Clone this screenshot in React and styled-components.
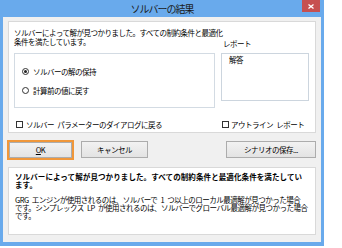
import React from "react";
import styled, { createGlobalStyle } from "styled-components";

const GlobalStyle = createGlobalStyle`
  body {
    margin: 0;
    background: #fff;
    font-family: "Noto Sans CJK JP", sans-serif;
    color: #000;
  }
`;

const Window = styled.div`
  width: 324px;
  height: 246px;
  box-sizing: border-box;
  background: #69aaec;
  padding: 0 3px 4px 3px;
  display: flex;
  flex-direction: column;
`;

const TitleBar = styled.div`
  height: 17px;
  display: grid;
  grid-template-columns: 1fr auto 1fr;
  align-items: start;
`;

const Title = styled.div`
  grid-column: 2;
  font-size: 10px;
  line-height: 17px;
  letter-spacing: -1px;
  color: #1a1a1a;
`;

const CloseButton = styled.div`
  grid-column: 3;
  justify-self: end;
  width: 18px;
  height: 12px;
  margin-right: 1px;
  background: #c75050;
  display: flex;
  align-items: center;
  justify-content: center;
`;

const Body = styled.div`
  flex: 1;
  background: #f0f0f0;
  padding: 4px 5px 7px 5px;
  display: flex;
  flex-direction: column;
`;

const Panel = styled.div`
  background: #fff;
  border: 1px solid #d9d9d9;
  box-sizing: border-box;
`;

const TopPanel = styled(Panel)`
  height: 112px;
  padding: 6px 6px 0 5px;
  display: grid;
  grid-template-columns: 201px 88px;
  column-gap: 6px;
  font-size: 7.5px;
  letter-spacing: -0.5px;
  word-spacing: 2px;
`;

const Message = styled.div`
  grid-column: 1 / 3;
  grid-row: 1;
  line-height: 9px;
  white-space: nowrap;
`;

const ReportLabel = styled.div`
  grid-column: 2;
  grid-row: 1;
  align-self: end;
  line-height: 9px;
  padding-left: 2px;
`;

const GroupBox = styled.div`
  grid-column: 1;
  grid-row: 2;
  margin-top: 5px;
  height: 55px;
  box-sizing: border-box;
  border: 1px solid #d3dbe3;
  padding: 12px 0 0 7px;
  display: flex;
  flex-direction: column;
  gap: 9px;
`;

const ListBox = styled.div`
  grid-column: 2;
  grid-row: 2;
  margin-top: 5px;
  height: 48px;
  box-sizing: border-box;
  border: 1px solid #ccd5de;
  padding: 1px 0 0 7px;
  line-height: 9px;
`;

const OptionRow = styled.label`
  display: flex;
  align-items: center;
  height: 10px;
  gap: ${({ gap }) => gap || 4}px;
  padding-left: ${({ indent }) => indent || 0}px;
  white-space: pre;
`;

const Radio = styled.span`
  width: 7px;
  height: 7px;
  box-sizing: border-box;
  border: 1px solid #333;
  border-radius: 50%;
  background: #fff;
  display: flex;
  align-items: center;
  justify-content: center;
  &::after {
    content: "";
    width: 3px;
    height: 3px;
    border-radius: 50%;
    background: ${({ checked }) => (checked ? "#222" : "transparent")};
  }
`;

const CheckBox = styled.span`
  width: 7px;
  height: 7px;
  box-sizing: border-box;
  border: 1px solid #333;
  background: #fff;
`;

const CheckCell = styled.div`
  grid-column: ${({ col }) => col};
  grid-row: 3;
  margin-top: 9px;
`;

const ButtonRow = styled.div`
  margin-top: 8px;
  height: 17px;
  display: flex;
  align-items: center;
  padding-left: 1px;
`;

const Button = styled.div`
  width: ${({ w }) => w}px;
  height: ${({ h }) => h || 17}px;
  box-sizing: border-box;
  margin-left: ${({ ml }) => (ml === "auto" ? "auto" : `${ml || 0}px`)};
  background: linear-gradient(#f2f2f2, #e3e3e3);
  border: 1px solid #acacac;
  font-size: 7.5px;
  letter-spacing: -0.5px;
  display: flex;
  align-items: center;
  justify-content: center;
  box-shadow: ${({ focus }) => (focus ? "0 0 0 2px #f0973a" : "none")};
`;

const BottomPanel = styled(Panel)`
  margin-top: 9px;
  flex: 1;
  padding: 5px 6px 0 6px;
  font-size: 7.5px;
  line-height: 8px;
  white-space: nowrap;
`;

const Headline = styled.div`
  font-weight: bold;
  letter-spacing: 0.1px;
`;

const Detail = styled.div`
  margin-top: 7px;
  letter-spacing: -0.5px;
  word-spacing: 2px;
`;

export default function App() {
  return (
    <>
      <GlobalStyle />
      <Window>
        <TitleBar>
          <Title>ソルバーの結果</Title>
          <CloseButton>
            <svg width="6" height="5" viewBox="0 0 6 5">
              <path d="M0.5 0.5 L5.5 4.5 M5.5 0.5 L0.5 4.5" stroke="#fff" strokeWidth="1.3" />
            </svg>
          </CloseButton>
        </TitleBar>
        <Body>
          <TopPanel>
            <Message>
              ソルバーによって解が見つかりました。すべての制約条件と最適化
              <br />
              条件を満たしています。
            </Message>
            <ReportLabel>レポート</ReportLabel>
            <GroupBox>
              <OptionRow>
                <Radio checked />
                ソルバーの解の保持
              </OptionRow>
              <OptionRow>
                <Radio />
                計算前の値に戻す
              </OptionRow>
            </GroupBox>
            <ListBox>解答</ListBox>
            <CheckCell col={1}>
              <OptionRow indent={2} gap={3}>
                <CheckBox />
                {"ソルバー パラメーターのダイアログに戻る"}
              </OptionRow>
            </CheckCell>
            <CheckCell col={2}>
              <OptionRow indent={1} gap={2}>
                <CheckBox />
                {"アウトライン レポート"}
              </OptionRow>
            </CheckCell>
          </TopPanel>
          <ButtonRow>
            <Button w={63} h={16} focus>
              <u>O</u>K
            </Button>
            <Button w={67} ml={9}>キャンセル</Button>
            <Button w={90} ml="auto">シナリオの保存...</Button>
          </ButtonRow>
          <BottomPanel>
            <Headline>
              ソルバーによって解が見つかりました。すべての制約条件と最適化条件を満たしてい
              <br />
              ます。
            </Headline>
            <Detail>
              GRG エンジンが使用されるのは、ソルバーで 1 つ以上のローカル最適解が見つかった場合
              <br />
              です。シンプレックス LP が使用されるのは、ソルバーでグローバル最適解が見つかった場合
              <br />
              です。
            </Detail>
          </BottomPanel>
        </Body>
      </Window>
    </>
  );
}
